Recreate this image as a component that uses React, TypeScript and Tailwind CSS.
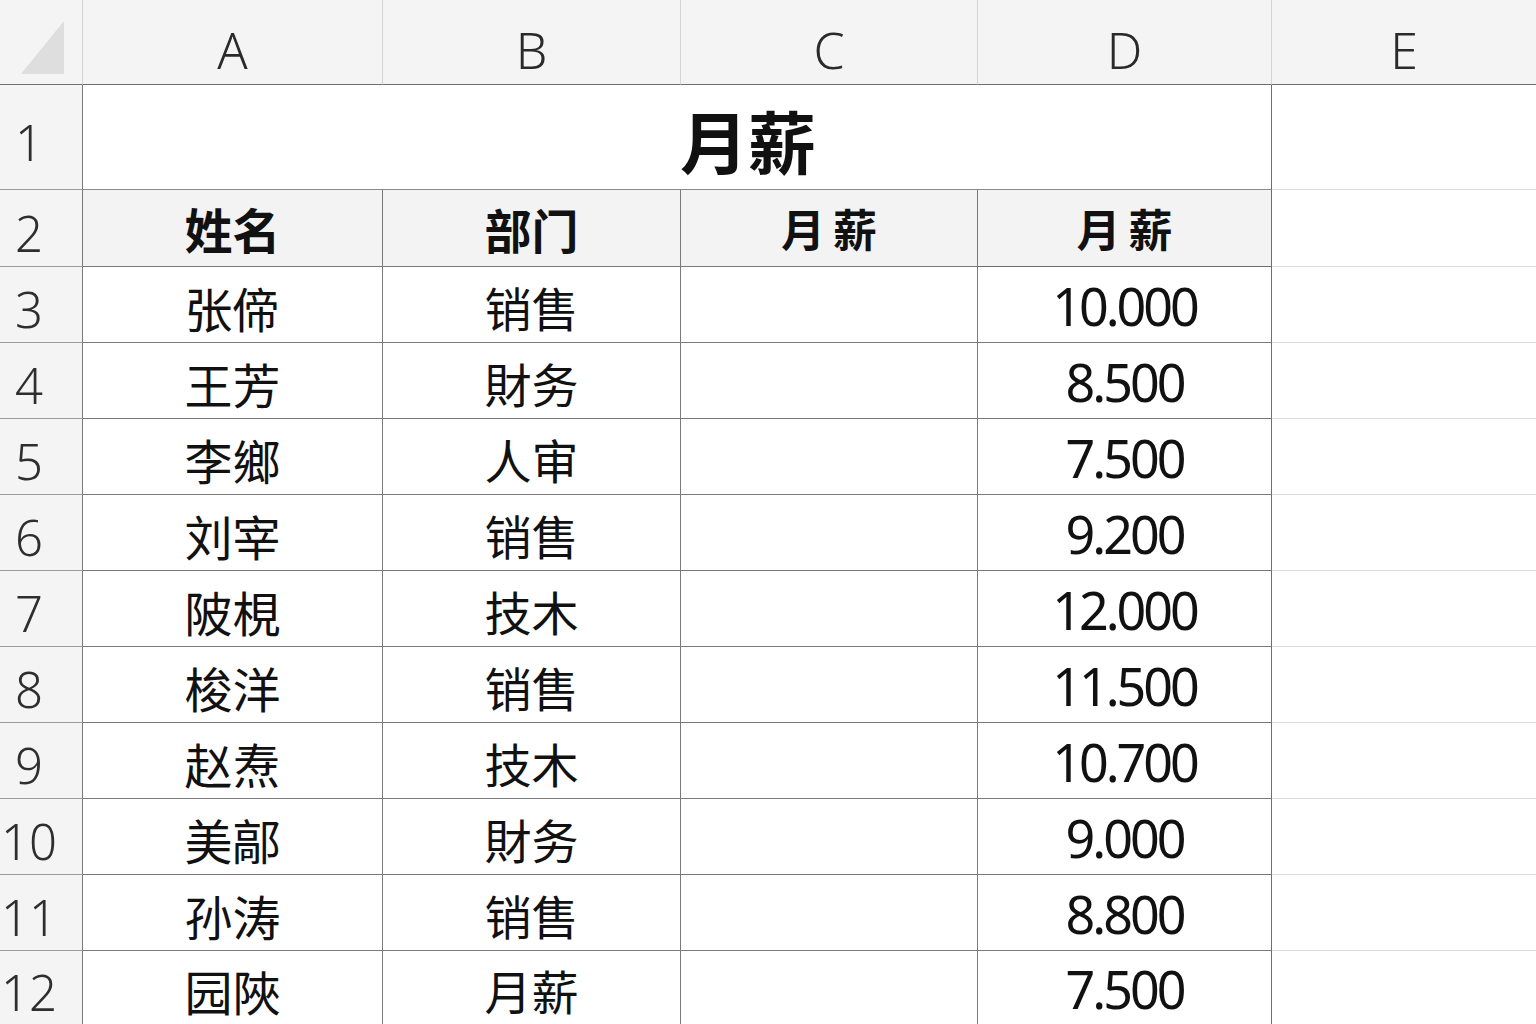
import React from "react";

const cjk = { fontFamily: '"Noto Sans CJK SC", "Noto Sans", sans-serif' };
const latin = { fontFamily: '"Noto Sans", "Open Sans", sans-serif' };

const rows: [string, string, string][] = [
  ["张偙", "销售", "10.000"],
  ["王芳", "財务", "8.500"],
  ["李鄉", "人审", "7.500"],
  ["刘宰", "销售", "9.200"],
  ["陂梘", "技木", "12.000"],
  ["梭洋", "销售", "11.500"],
  ["赵焘", "技木", "10.700"],
  ["美鄗", "財务", "9.000"],
  ["孙涛", "销售", "8.800"],
  ["园陜", "月薪", "7.500"],
];

function RowNum({ n, h, last }: { n: number; h: string; last?: boolean }) {
  return (
    <div
      className={`${h} flex items-center bg-[#f4f4f4] border-r border-r-[#7a7a7a] ${
        last ? "" : "border-b border-b-[#9a9a9a]"
      }`}
    >
      <span
        className="w-[58px] text-center text-[49px] leading-none font-light text-[#2e2e2e] pt-[10px]"
        style={latin}
      >
        {n}
      </span>
    </div>
  );
}

export default function App() {
  const headers = ["A", "B", "C", "D", "E"];
  return (
    <div className="w-[1536px] h-[1024px] overflow-hidden bg-white">
      <div className="grid grid-cols-[83px_300px_298px_297px_294px_1fr]">
        {/* Header row */}
        <div className="h-[85px] bg-[#f4f4f4] border-b border-r border-b-[#6e6e6e] border-r-[#d4d4d4] flex items-end justify-end pr-[17px] pb-[9px]">
          <svg width="44" height="54" viewBox="0 0 44 54">
            <polygon points="43,0 43,53 0,53" fill="#dedede" />
          </svg>
        </div>
        {headers.map((h, i) => (
          <div
            key={h}
            className={`h-[85px] bg-[#f4f4f4] border-b border-b-[#6e6e6e] flex items-center justify-center pt-[16px] ${
              i < 4 ? "border-r border-r-[#d4d4d4]" : ""
            }`}
          >
            <span className="text-[50px] leading-none font-light text-[#2a2a2a]" style={latin}>
              {h}
            </span>
          </div>
        ))}

        {/* Row 1 */}
        <RowNum n={1} h="h-[105px]" />
        <div className="col-span-4 h-[105px] border-b border-r border-b-[#8a8a8a] border-r-[#6e6e6e] flex items-center pl-[597px] pt-[6px]">
          <span className="text-[68px] leading-none font-bold text-[#111111]" style={cjk}>
            月薪
          </span>
        </div>
        <div className="h-[105px] border-b border-b-[#dcdcdc]" />

        {/* Row 2 */}
        <RowNum n={2} h="h-[77px]" />
        <div className="h-[77px] bg-[#f3f3f3] border-b border-r border-[#7a7a7a] flex items-center justify-center">
          <span className="text-[48px] leading-none font-bold text-[#111111]" style={cjk}>
            姓名
          </span>
        </div>
        <div className="h-[77px] bg-[#f3f3f3] border-b border-r border-[#7a7a7a] flex items-center justify-center">
          <span className="text-[47px] leading-none font-bold text-[#111111]" style={cjk}>
            部门
          </span>
        </div>
        <div className="h-[77px] bg-[#f3f3f3] border-b border-r border-[#7a7a7a] flex items-center justify-center">
          <span className="text-[44px] leading-none font-bold tracking-[8px] pl-[8px] text-[#111111]" style={cjk}>
            月薪
          </span>
        </div>
        <div className="h-[77px] bg-[#f3f3f3] border-b border-r border-[#6e6e6e] flex items-center justify-center">
          <span className="text-[44px] leading-none font-bold tracking-[8px] pl-[8px] text-[#111111]" style={cjk}>
            月薪
          </span>
        </div>
        <div className="h-[77px] border-b border-b-[#dcdcdc]" />

        {rows.map(([name, dept, sal], i) => {
          const last = i === rows.length - 1;
          const h = last ? "h-[73px]" : "h-[76px]";
          const bb = last ? "" : "border-b";
          return (
            <React.Fragment key={i}>
              <RowNum n={i + 3} h={h} last={last} />
              <div className={`${h} ${bb} border-r border-[#7a7a7a] flex items-center justify-center pt-[4px]`}>
                <span className="text-[48px] leading-none text-[#111111]" style={cjk}>
                  {name}
                </span>
              </div>
              <div className={`${h} ${bb} border-r border-[#7a7a7a] flex items-center justify-center pt-[4px]`}>
                <span className="text-[47px] leading-none text-[#111111]" style={cjk}>
                  {dept}
                </span>
              </div>
              <div className={`${h} ${bb} border-r border-[#7a7a7a]`} />
              <div className={`${h} ${bb} border-r border-[#7a7a7a] border-r-[#6e6e6e] flex items-center justify-center pt-[2px]`}>
                <span className="text-[52px] leading-none tracking-[-3px] text-[#111111]" style={latin}>
                  {sal}
                </span>
              </div>
              <div className={`${h} ${last ? "" : "border-b border-b-[#dcdcdc]"}`} />
            </React.Fragment>
          );
        })}
      </div>
    </div>
  );
}
